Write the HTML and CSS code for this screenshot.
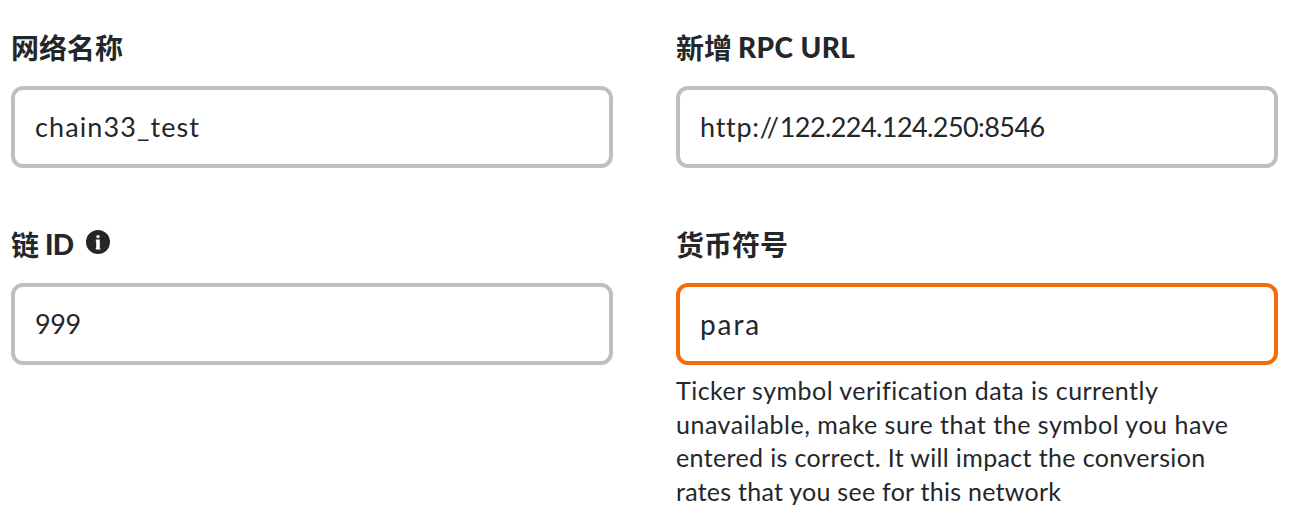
FILE: index.html
```html
<!DOCTYPE html>
<html lang="zh-CN">
<head>
<meta charset="utf-8">
<title>网络</title>
<link rel="stylesheet" href="styles.css">
</head>
<body>
<main class="form">
  <section class="field">
    <div class="label"><span>网络名称</span></div>
    <div class="box"><span class="name">chain33_test</span></div>
  </section>
  <section class="field">
    <div class="label"><span>新增</span><span class="latin rpc">RPC URL</span></div>
    <div class="box"><span class="url"><span class="scheme">http://</span>122.224.124.250:8546</span></div>
  </section>
  <section class="field">
    <div class="label"><span>链</span><span class="latin id">ID</span>
      <svg class="info" viewBox="0 0 24 24" aria-hidden="true"><circle cx="12" cy="12" r="12"/><circle class="mark" cx="12" cy="6.6" r="1.7"/><path class="mark" d="M9.8 9.6h4v8.4h.4v1.6H9.8V18h.4v-6.8h-.4z"/></svg>
    </div>
    <div class="box"><span class="chain">999</span></div>
  </section>
  <section class="field">
    <div class="label"><span>货币符号</span></div>
    <div class="box warn"><span class="symbol">para</span></div>
    <p class="help"><span class="l1">Ticker symbol verification data is currently</span><span class="l2">unavailable, make sure that the symbol you have</span><span class="l3">entered is correct. It will impact the conversion</span><span class="l4">rates that you see for this network</span></p>
  </section>
</main>
</body>
</html>
```
FILE: styles.css
```css
* { box-sizing: border-box; }
body {
  margin: 0;
  background: #fff;
  color: #24272a;
  font-family: Lato, "Noto Sans CJK SC", sans-serif;
}
.form {
  display: grid;
  grid-template-columns: 602px 602px;
  column-gap: 63px;
  grid-template-rows: 197px auto;
  padding: 26px 0 0 11px;
}
.label {
  display: flex;
  align-items: center;
  height: 44px;
  font-size: 28px;
  line-height: 44px;
  font-weight: 700;
  white-space: nowrap;
}
.latin { margin: -2px 0 0 6px; font-weight: 900; }
.rpc { letter-spacing: 0.4px; }
.id { letter-spacing: -0.8px; }
.info { width: 24px; height: 24px; margin: -6px 0 0 13px; fill: #24272a; }
.info .mark { fill: #fff; }
.box {
  display: flex;
  align-items: center;
  height: 82px;
  margin-top: 16px;
  padding: 0 20px;
  border: 4px solid #bbc0c5;
  border-radius: 12px;
  font-size: 27px;
  line-height: 36px;
}
.warn { border-color: #f66a0a; }
.name { letter-spacing: 1.1px; }
.url { letter-spacing: -0.58px; }
.scheme { letter-spacing: 0.75px; }
.chain { letter-spacing: -0.4px; }
.symbol { font-size: 28px; letter-spacing: 1.9px; }
.help {
  display: flex;
  flex-direction: column;
  align-items: flex-start;
  margin: 9px 0 0;
  font-size: 25px;
  line-height: 33.6px;
  white-space: nowrap;
}
.l1 { letter-spacing: 0.47px; }
.l2 { letter-spacing: 0.52px; }
.l3 { letter-spacing: 0.36px; }
.l4 { letter-spacing: 0.26px; }
```
